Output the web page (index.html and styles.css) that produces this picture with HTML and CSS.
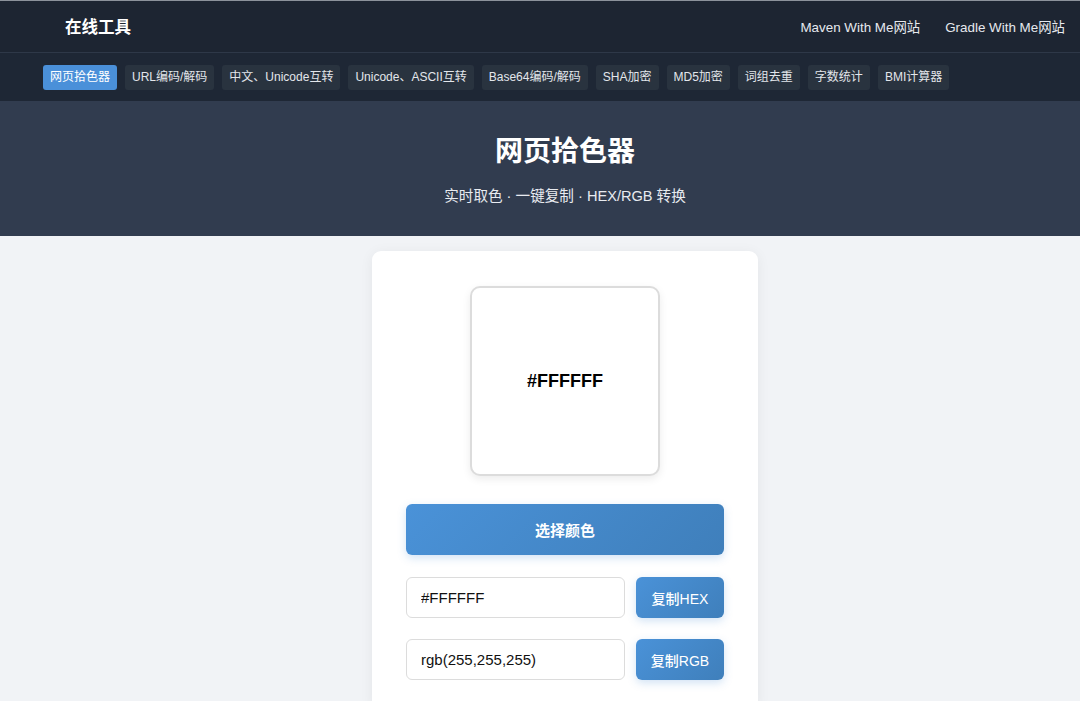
FILE: index.html
```html
<!DOCTYPE html>
<html lang="zh-CN">

<head>
  <meta charset="UTF-8">
  <title>网页拾色器 - 在线工具</title>
  <link rel="stylesheet" href="styles.css">
</head>

<body>
  <div class="topbar">
    <div class="logo">在线工具</div>
    <div class="links">
      <a href="#">Maven With Me网站</a>
      <a href="#">Gradle With Me网站</a>
    </div>
  </div>

  <div class="toolnav">
    <a class="tool active" href="#">网页拾色器</a>
    <a class="tool" href="#">URL编码/解码</a>
    <a class="tool" href="#">中文、Unicode互转</a>
    <a class="tool" href="#">Unicode、ASCII互转</a>
    <a class="tool" href="#">Base64编码/解码</a>
    <a class="tool" href="#">SHA加密</a>
    <a class="tool" href="#">MD5加密</a>
    <a class="tool" href="#">词组去重</a>
    <a class="tool" href="#">字数统计</a>
    <a class="tool" href="#">BMI计算器</a>
  </div>

  <div class="hero">
    <h1>网页拾色器</h1>
    <p>实时取色 · 一键复制 · HEX/RGB 转换</p>
  </div>

  <div class="main">
    <div class="card">
      <div class="preview" id="preview">
        <span id="previewText">#FFFFFF</span>
      </div>

      <button class="btn btn-pick" id="btnPick">选择颜色</button>
      <input type="color" id="picker" class="picker" value="#ffffff" />

      <div class="row">
        <input type="text" class="field" id="txtHex" value="#FFFFFF" readonly />
        <button class="btn btn-copy" id="btnHex">复制HEX</button>
      </div>
      <div class="row">
        <input type="text" class="field" id="txtRgb" value="rgb(255,255,255)" readonly />
        <button class="btn btn-copy" id="btnRgb">复制RGB</button>
      </div>
    </div>
  </div>

  <script type="text/javascript">
    var picker = document.getElementById('picker');
    var preview = document.getElementById('preview');
    var previewText = document.getElementById('previewText');
    var txtHex = document.getElementById('txtHex');
    var txtRgb = document.getElementById('txtRgb');

    document.getElementById('btnPick').addEventListener('click', function () {
      picker.click();
    });

    // 选色后同步 HEX / RGB
    picker.addEventListener('input', function () {
      var hex = picker.value.toUpperCase();
      var r = parseInt(hex.substr(1, 2), 16),
        g = parseInt(hex.substr(3, 2), 16),
        b = parseInt(hex.substr(5, 2), 16);

      preview.style.backgroundColor = hex;
      previewText.style.color = (r * 0.299 + g * 0.587 + b * 0.114) > 150 ? '#000' : '#fff';
      previewText.textContent = hex;
      txtHex.value = hex;
      txtRgb.value = 'rgb(' + r + ',' + g + ',' + b + ')';
    });

    function copy(input) {
      input.select();
      document.execCommand('copy');
    }

    document.getElementById('btnHex').addEventListener('click', function () { copy(txtHex); });
    document.getElementById('btnRgb').addEventListener('click', function () { copy(txtRgb); });
  </script>
</body>

</html>
```

FILE: styles.css
```css
* {
  box-sizing: border-box;
}

body {
  margin: 0;
  width: 1130px;
  font-family: "Liberation Sans", "Noto Sans CJK SC", sans-serif;
  background-color: #f1f3f6;
  color: #222;
}

a {
  text-decoration: none;
}

.topbar {
  display: flex;
  align-items: center;
  justify-content: space-between;
  height: 53px;
  padding: 0 65px 2px;
  border-top: 1px solid #8c929b;
  border-bottom: 1px solid #2e3848;
  background-color: #1d2532;
}

.logo {
  font-size: 16.5px;
  font-weight: bold;
  color: #fff;
}

.links {
  display: flex;
  gap: 25px;
}

.links a {
  font-size: 13.4px;
  color: #e6e9ee;
}

.toolnav {
  display: flex;
  gap: 8px;
  height: 48px;
  align-items: center;
  padding: 0 43px;
  background-color: #1e2735;
}

.tool {
  padding: 4px 7px;
  border-radius: 3px;
  font-size: 12px;
  line-height: 17px;
  color: #e3e6eb;
  background-color: #29333f;
}

.tool.active {
  color: #fff;
  background-color: #4a90d9;
}

.hero {
  height: 135px;
  padding-top: 32px;
  text-align: center;
  background-color: #313c4f;
  color: #fff;
}

.hero h1 {
  margin: 0;
  font-size: 28px;
  line-height: 38px;
}

.hero p {
  margin: 15px 0 0;
  font-size: 14.6px;
  line-height: 20px;
  color: #e8ebf0;
}

.main {
  display: flex;
  justify-content: center;
  padding: 15px 0 40px;
}

.card {
  width: 386px;
  padding: 35px 34px 30px;
  border-radius: 9px;
  background-color: #fff;
  box-shadow: 0 2px 14px rgba(0, 0, 0, 0.06);
}

.preview {
  display: flex;
  align-items: center;
  justify-content: center;
  width: 190px;
  height: 190px;
  margin: 0 auto;
  border: 2px solid #dcdcdc;
  border-radius: 10px;
  background-color: #fff;
  box-shadow: 0 3px 8px rgba(0, 0, 0, 0.08);
  font-size: 18px;
  font-weight: bold;
  color: #000;
}

.btn {
  border: 0;
  border-radius: 6px;
  font-family: inherit;
  color: #fff;
  cursor: pointer;
  background: linear-gradient(135deg, #4a92d8, #3f7fbb);
  box-shadow: 0 3px 8px rgba(74, 144, 217, 0.25);
}

.btn-pick {
  display: block;
  width: 100%;
  height: 51px;
  margin-top: 28px;
  font-size: 15px;
  font-weight: bold;
}

.picker {
  display: none;
}

.row {
  display: flex;
  gap: 11px;
  margin-top: 22px;
}

.row + .row {
  margin-top: 21px;
}

.field {
  flex: 1;
  min-width: 0;
  height: 41px;
  padding: 0 14px;
  border: 1.5px solid #dcdcdc;
  border-radius: 6px;
  font-family: inherit;
  font-size: 15px;
  color: #111;
  outline: none;
}

.btn-copy {
  flex: none;
  width: 88px;
  height: 41px;
  font-size: 14px;
  font-weight: 500;
}
```
